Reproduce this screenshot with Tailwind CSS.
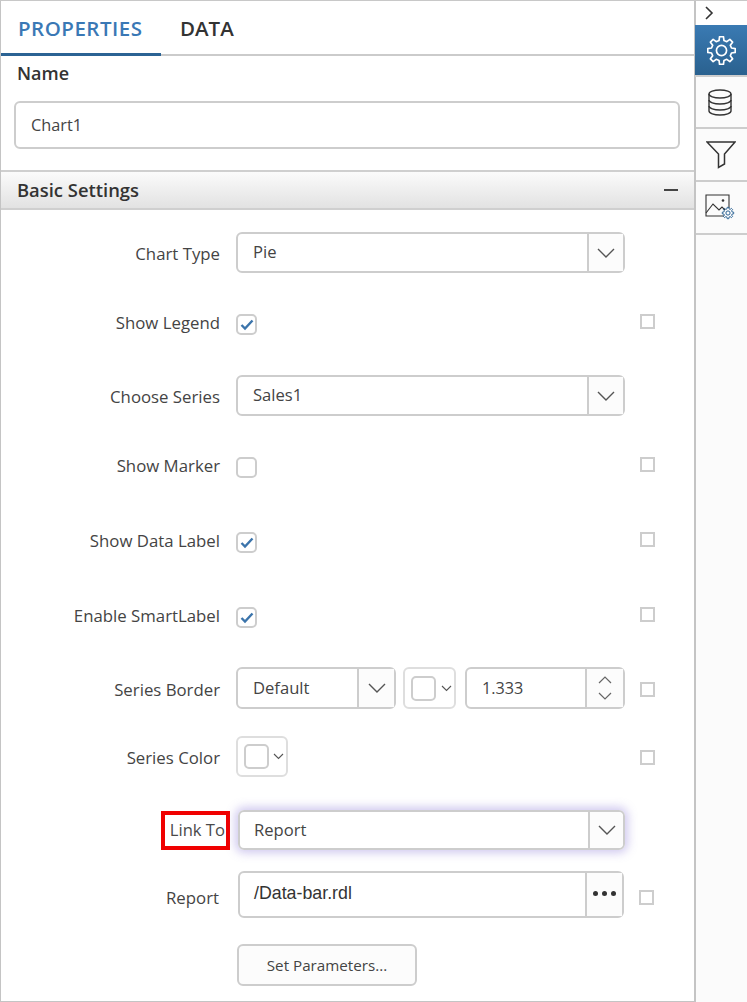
<!DOCTYPE html>
<html lang="en">
<head>
    <meta charset="UTF-8">
    <meta name="viewport" content="width=device-width, initial-scale=1.0">
    <title>Chart Properties</title>
    <script src="https://cdn.jsdelivr.net/npm/@tailwindcss/browser@4"></script>
</head>
<body class="bg-white font-['Open_Sans',sans-serif] text-[16.8px] text-[#444]">
<div class="flex w-[747px] h-[1002px] overflow-hidden border-t border-[#c8c8c8]">

    <!-- properties panel -->
    <div class="w-[696px] h-[1001px] shrink-0 border-l border-r-2 border-b border-[#c4c4c4]">
        <div class="flex h-[55px] border-b-2 border-[#cbcbcb]">
            <div class="w-[160px] h-[55px] border-b-[3px] border-[#2b6394] pl-[17px] pt-[12px] text-[20.5px] tracking-[0.5px] leading-[30px] font-semibold text-[#3a78b5]">PROPERTIES</div>
            <div class="pl-[19px] pt-[12px] text-[20.5px] leading-[30px] font-semibold text-[#333]">DATA</div>
        </div>

        <div class="pl-[16px] pt-[5px] h-[24px] leading-[24px] text-[18px] font-semibold text-[#333]">Name</div>
        <div class="ml-[13px] mt-[21px] w-[666px] h-[48px] rounded-[6px] border-2 border-[#cdcdcd] pl-[15px] flex items-center text-[16.3px]">Chart1</div>

        <div class="mt-[21px] h-[40px] border-y-2 border-[#cfcfcf] bg-gradient-to-b from-[#fbfbfb] to-[#e2e2e2] flex items-center justify-between pl-[16px] pr-[16px]">
            <span class="font-semibold text-[#333] text-[18.4px]">Basic Settings</span>
            <span class="w-[14px] h-[2px] bg-[#444]"></span>
        </div>

        <!-- Chart Type -->
        <div class="flex items-center mt-[22px] h-[41px]">
            <div class="w-[235px] pr-[16px] text-right pt-[3px]">Chart Type</div>
            <div class="w-[389px] h-[41px] rounded-[6px] border-2 border-[#cdcdcd] flex text-[16.6px]">
                <div class="flex-1 pl-[15px] flex items-center">Pie</div>
                <div class="w-[36px] border-l-2 border-[#cdcdcd] bg-[#fcfcfc] flex items-center justify-center">
                    <svg width="18" height="10" viewBox="0 0 18 10" fill="none" stroke="#555" stroke-width="1.4"><path d="M1 1l8 8 8-8"/></svg>
                </div>
            </div>
        </div>

        <!-- Show Legend -->
        <div class="flex items-center mt-[41px] h-[21px]">
            <div class="w-[235px] pr-[16px] text-right mb-[3px]">Show Legend</div>
            <div class="w-[21px] h-[21px] rounded-[5px] border-2 border-[#cdcdcd] flex items-center justify-center">
                <svg width="14" height="12" viewBox="0 0 14 12" fill="none" stroke="#3b74ab" stroke-width="2.4"><path d="M1.5 6l3.500 3.500 7.500-8"/></svg>
            </div>
            <div class="ml-[383px] mb-[7px] w-[15px] h-[15px] border-2 border-[#cdcdcd]"></div>
        </div>

        <!-- Choose Series -->
        <div class="flex items-center mt-[40px] h-[41px]">
            <div class="w-[235px] pr-[16px] text-right pt-[3px]">Choose Series</div>
            <div class="w-[389px] h-[41px] rounded-[6px] border-2 border-[#cdcdcd] flex text-[16.6px]">
                <div class="flex-1 pl-[15px] flex items-center">Sales1</div>
                <div class="w-[36px] border-l-2 border-[#cdcdcd] bg-[#fcfcfc] flex items-center justify-center">
                    <svg width="18" height="10" viewBox="0 0 18 10" fill="none" stroke="#555" stroke-width="1.4"><path d="M1 1l8 8 8-8"/></svg>
                </div>
            </div>
        </div>

        <!-- Show Marker -->
        <div class="flex items-center mt-[41px] h-[21px]">
            <div class="w-[235px] pr-[16px] text-right mb-[3px]">Show Marker</div>
            <div class="w-[21px] h-[21px] rounded-[5px] border-2 border-[#cdcdcd]"></div>
            <div class="ml-[383px] mb-[7px] w-[15px] h-[15px] border-2 border-[#cdcdcd]"></div>
        </div>

        <!-- Show Data Label -->
        <div class="flex items-center mt-[54px] h-[21px]">
            <div class="w-[235px] pr-[16px] text-right mb-[3px]">Show Data Label</div>
            <div class="w-[21px] h-[21px] rounded-[5px] border-2 border-[#cdcdcd] flex items-center justify-center">
                <svg width="14" height="12" viewBox="0 0 14 12" fill="none" stroke="#3b74ab" stroke-width="2.4"><path d="M1.5 6l3.500 3.500 7.500-8"/></svg>
            </div>
            <div class="ml-[383px] mb-[7px] w-[15px] h-[15px] border-2 border-[#cdcdcd]"></div>
        </div>

        <!-- Enable SmartLabel -->
        <div class="flex items-center mt-[54px] h-[21px]">
            <div class="w-[235px] pr-[16px] text-right mb-[3px]">Enable SmartLabel</div>
            <div class="w-[21px] h-[21px] rounded-[5px] border-2 border-[#cdcdcd] flex items-center justify-center">
                <svg width="14" height="12" viewBox="0 0 14 12" fill="none" stroke="#3b74ab" stroke-width="2.4"><path d="M1.5 6l3.500 3.500 7.500-8"/></svg>
            </div>
            <div class="ml-[383px] mb-[7px] w-[15px] h-[15px] border-2 border-[#cdcdcd]"></div>
        </div>

        <!-- Series Border -->
        <div class="flex items-center mt-[39px] h-[42px]">
            <div class="w-[235px] pr-[16px] text-right pt-[3px]">Series Border</div>
            <div class="w-[160px] h-[42px] rounded-[6px] border-2 border-[#cdcdcd] flex text-[16.6px]">
                <div class="flex-1 pl-[15px] flex items-center">Default</div>
                <div class="w-[37px] border-l-2 border-[#cdcdcd] bg-[#fcfcfc] flex items-center justify-center">
                    <svg width="18" height="10" viewBox="0 0 18 10" fill="none" stroke="#555" stroke-width="1.4"><path d="M1 1l8 8 8-8"/></svg>
                </div>
            </div>
            <div class="ml-[7px] w-[53px] h-[42px] rounded-[6px] border-2 border-[#dedede] flex items-center pl-[6px]">
                <div class="w-[25px] h-[25px] rounded-[5px] border-2 border-[#cdcdcd]"></div>
                <svg class="ml-[5px]" width="11" height="7" viewBox="0 0 11 7" fill="none" stroke="#555" stroke-width="1.1"><path d="M1 1l4.500 4.500L10 1"/></svg>
            </div>
            <div class="ml-[9px] w-[160px] h-[42px] rounded-[6px] border-2 border-[#cdcdcd] flex">
                <div class="flex-1 pl-[15px] flex items-center text-[16.2px]">1.333</div>
                <div class="w-[38px] border-l-2 border-[#cdcdcd] bg-[#fcfcfc] flex flex-col items-center justify-center gap-[8px]">
                    <svg width="14" height="8" viewBox="0 0 14 8" fill="none" stroke="#666" stroke-width="1.2"><path d="M1 7l6-6 6 6"/></svg>
                    <svg width="14" height="8" viewBox="0 0 14 8" fill="none" stroke="#666" stroke-width="1.2"><path d="M1 1l6 6 6-6"/></svg>
                </div>
            </div>
            <div class="ml-[15px] mt-[2px] w-[15px] h-[15px] border-2 border-[#cdcdcd]"></div>
        </div>

        <!-- Series Color -->
        <div class="flex items-center mt-[27px] h-[41px]">
            <div class="w-[235px] pr-[16px] text-right pt-[3px]">Series Color</div>
            <div class="w-[52px] h-[41px] rounded-[6px] border-2 border-[#dedede] flex items-center pl-[6px]">
                <div class="w-[25px] h-[25px] rounded-[5px] border-2 border-[#cdcdcd]"></div>
                <svg class="ml-[4px]" width="11" height="7" viewBox="0 0 11 7" fill="none" stroke="#555" stroke-width="1.1"><path d="M1 1l4.500 4.500L10 1"/></svg>
            </div>
            <div class="ml-[352px] mt-[2px] w-[15px] h-[15px] border-2 border-[#cdcdcd]"></div>
        </div>

        <!-- Link To -->
        <div class="flex items-center mt-[33px] h-[40px]">
            <div class="w-[237px] pr-[8px] flex justify-end">
                <div class="w-[69px] h-[39px] border-[4px] border-[#f00000] flex items-center justify-end pr-[1px] text-[#4a4a4a] text-[16.6px] whitespace-nowrap">Link To</div>
            </div>
            <div class="w-[387px] h-[40px] rounded-[6px] border-2 border-[#cdcdcd] flex text-[16.6px] shadow-[0_0_10px_3px_rgba(120,100,210,0.35)]">
                <div class="flex-1 pl-[14px] flex items-center">Report</div>
                <div class="w-[35px] border-l-2 border-[#cdcdcd] bg-[#fcfcfc] rounded-r-[5px] flex items-center justify-center">
                    <svg width="18" height="10" viewBox="0 0 18 10" fill="none" stroke="#555" stroke-width="1.4"><path d="M1 1l8 8 8-8"/></svg>
                </div>
            </div>
        </div>

        <!-- Report -->
        <div class="flex items-center mt-[21px] h-[47px]">
            <div class="w-[237px] pr-[19px] text-right pt-[7px]">Report</div>
            <div class="w-[386px] h-[47px] rounded-[6px] border-2 border-[#cdcdcd] flex">
                <div class="flex-1 pl-[14px] pb-[2px] flex items-center font-['Liberation_Sans',sans-serif] text-[17.8px] text-[#333]">/Data-bar.rdl</div>
                <div class="w-[37px] border-l-2 border-[#cdcdcd] bg-[#fcfcfc] flex items-center justify-center gap-[4px] pb-[3px]">
                    <span class="w-[5px] h-[5px] rounded-full bg-[#333]"></span>
                    <span class="w-[5px] h-[5px] rounded-full bg-[#333]"></span>
                    <span class="w-[5px] h-[5px] rounded-full bg-[#333]"></span>
                </div>
            </div>
            <div class="ml-[15px] mt-[5px] w-[15px] h-[15px] border-2 border-[#cdcdcd]"></div>
        </div>

        <!-- Set Parameters -->
        <div class="ml-[236px] mt-[26px] w-[180px] h-[42px] rounded-[6px] border-2 border-[#cdcdcd] bg-[#fcfcfc] flex items-center justify-center text-[15.2px]">Set Parameters...</div>
    </div>

    <!-- icon sidebar -->
    <div class="w-[51px] h-[1001px] bg-[#fbfbfb]">
        <div class="h-[24px] flex items-center justify-start pl-[9px] bg-white">
            <svg width="9" height="14" viewBox="0 0 9 14" fill="none" stroke="#333" stroke-width="1.6"><path d="M1 1l6 6-6 6"/></svg>
        </div>
        <div class="-ml-px h-[52px] bg-gradient-to-b from-[#3a7ab3] to-[#2a618f] border-b-2 border-[#cdcdcd] flex items-center justify-center">
            <svg width="29" height="29" viewBox="0 0 24 24" fill="none" stroke="#fff" stroke-width="1.4" stroke-linejoin="round">
                <polygon points="20.25,9.94 23.39,10.4 23.39,13.6 20.25,14.06 19.29,16.38 21.18,18.92 18.92,21.18 16.38,19.29 14.06,20.25 13.6,23.39 10.4,23.39 9.94,20.25 7.62,19.29 5.08,21.18 2.82,18.92 4.71,16.38 3.75,14.06 .61,13.6 .61,10.4 3.75,9.94 4.71,7.62 2.82,5.08 5.08,2.82 7.62,4.71 9.94,3.75 10.4,.61 13.6,.61 14.06,3.75 16.38,4.71 18.92,2.82 21.18,5.08 19.29,7.62"/>
                <circle cx="12" cy="12" r="4.2"/>
            </svg>
        </div>
        <div class="h-[52px] border-b-2 border-[#cdcdcd] flex items-center justify-center pr-[3px]">
            <svg width="24" height="27" viewBox="0 0 24 27" fill="none" stroke="#333" stroke-width="1.4">
                <ellipse cx="12" cy="5" rx="11" ry="4"/>
                <path d="M1 5v17c0 2.200 5 4 11 4s11-1.800 11-4V5"/>
                <path d="M1 11c0 2.200 5 4 11 4s11-1.800 11-4"/>
                <path d="M1 17c0 2.200 5 4 11 4s11-1.800 11-4"/>
            </svg>
        </div>
        <div class="h-[53px] border-b-2 border-[#cdcdcd] flex items-center justify-center pr-[1px]">
            <svg width="30" height="28" viewBox="0 0 30 28" fill="none" stroke="#333" stroke-width="1.5" stroke-linejoin="miter">
                <path d="M1 1h28L18.500 13v10l-6 3.500V13z"/>
            </svg>
        </div>
        <div class="h-[53px] border-b-2 border-[#cdcdcd] flex items-center justify-start pl-[9px]">
            <svg width="30" height="28" viewBox="0 0 30 28" fill="none" stroke="#333" stroke-width="1.1">
                <path d="M19 22H1V1h23v13"/>
                <path d="M1 19l7-9 6 6 3-3 3 3"/>
                <circle cx="18" cy="6.500" r="1.300" fill="#333" stroke="none"/>
                <g transform="translate(17 13) scale(.5)" stroke="#2b6394" stroke-width="2" stroke-linejoin="round">
                    <polygon points="20.25,9.94 23.39,10.4 23.39,13.6 20.25,14.06 19.29,16.38 21.18,18.92 18.92,21.18 16.38,19.29 14.06,20.25 13.6,23.39 10.4,23.39 9.94,20.25 7.62,19.29 5.08,21.18 2.82,18.92 4.71,16.38 3.75,14.06 .61,13.6 .61,10.4 3.75,9.94 4.71,7.62 2.82,5.08 5.08,2.82 7.62,4.71 9.94,3.75 10.4,.61 13.6,.61 14.06,3.75 16.38,4.71 18.92,2.82 21.18,5.08 19.29,7.62"/>
                    <circle cx="12" cy="12" r="4.200"/>
                </g>
            </svg>
        </div>
    </div>
</div>
</body>
</html>
